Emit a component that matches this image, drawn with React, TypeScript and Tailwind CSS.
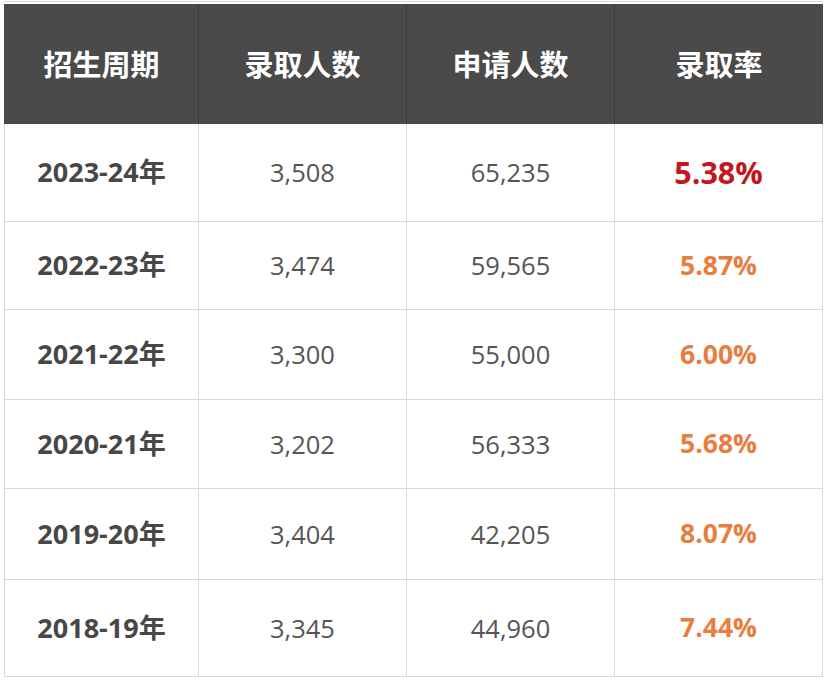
import React from "react";

const rows = [
  { y: "2023-24年", a: "3,508", b: "65,235", r: "5.38%", h: "h-[98px]", hi: true },
  { y: "2022-23年", a: "3,474", b: "59,565", r: "5.87%", h: "h-[88px]", hi: false },
  { y: "2021-22年", a: "3,300", b: "55,000", r: "6.00%", h: "h-[90px]", hi: false },
  { y: "2020-21年", a: "3,202", b: "56,333", r: "5.68%", h: "h-[89px]", hi: false },
  { y: "2019-20年", a: "3,404", b: "42,205", r: "8.07%", h: "h-[91px]", hi: false },
  { y: "2018-19年", a: "3,345", b: "44,960", r: "7.44%", h: "h-[97px]", hi: false },
];

const font = "font-['Open_Sans','Noto_Sans_CJK_SC',sans-serif]";

export default function App() {
  const headers = ["招生周期", "录取人数", "申请人数", "录取率"];
  return (
    <div className="w-[828px] h-[682px] bg-white">
      <div className="ml-[4px] mt-[1px] w-[819px] border-t border-[#d6d6d6] pt-[2px]">
        <div className="grid grid-cols-[195px_208px_208px_208px] bg-[#4a4a4a] h-[120px]">
          {headers.map((h, i) => (
            <div
              key={h}
              className={`flex items-center justify-center text-white text-[29px] font-bold font-['Noto_Sans_CJK_SC',sans-serif] ${
                i < 3 ? "border-r border-[#3a3a3a]" : ""
              } ${i === 0 ? "pl-[1px]" : ""}`}
            >
              {h}
            </div>
          ))}
        </div>
        <div className={`border-l border-[#d9d9d9] ${font}`}>
          {rows.map((r) => (
            <div
              key={r.y}
              className={`grid grid-cols-[194px_208px_208px_208px] border-b border-[#d9d9d9] ${r.h}`}
            >
              <div className="flex items-center justify-center border-r border-[#d9d9d9] text-[27px] font-bold text-[#474747]">
                {r.y}
              </div>
              <div className="flex items-center justify-center border-r border-[#d9d9d9] text-[25.5px] text-[#555555]">
                {r.a}
              </div>
              <div className="flex items-center justify-center border-r border-[#d9d9d9] text-[25.5px] text-[#555555]">
                {r.b}
              </div>
              <div
                className={`flex items-center justify-center border-r border-[#d9d9d9] font-bold ${
                  r.hi ? "text-[30.5px] text-[#c4161e]" : "text-[26.5px] text-[#e97d3e]"
                }`}
              >
                {r.r}
              </div>
            </div>
          ))}
        </div>
      </div>
    </div>
  );
}
